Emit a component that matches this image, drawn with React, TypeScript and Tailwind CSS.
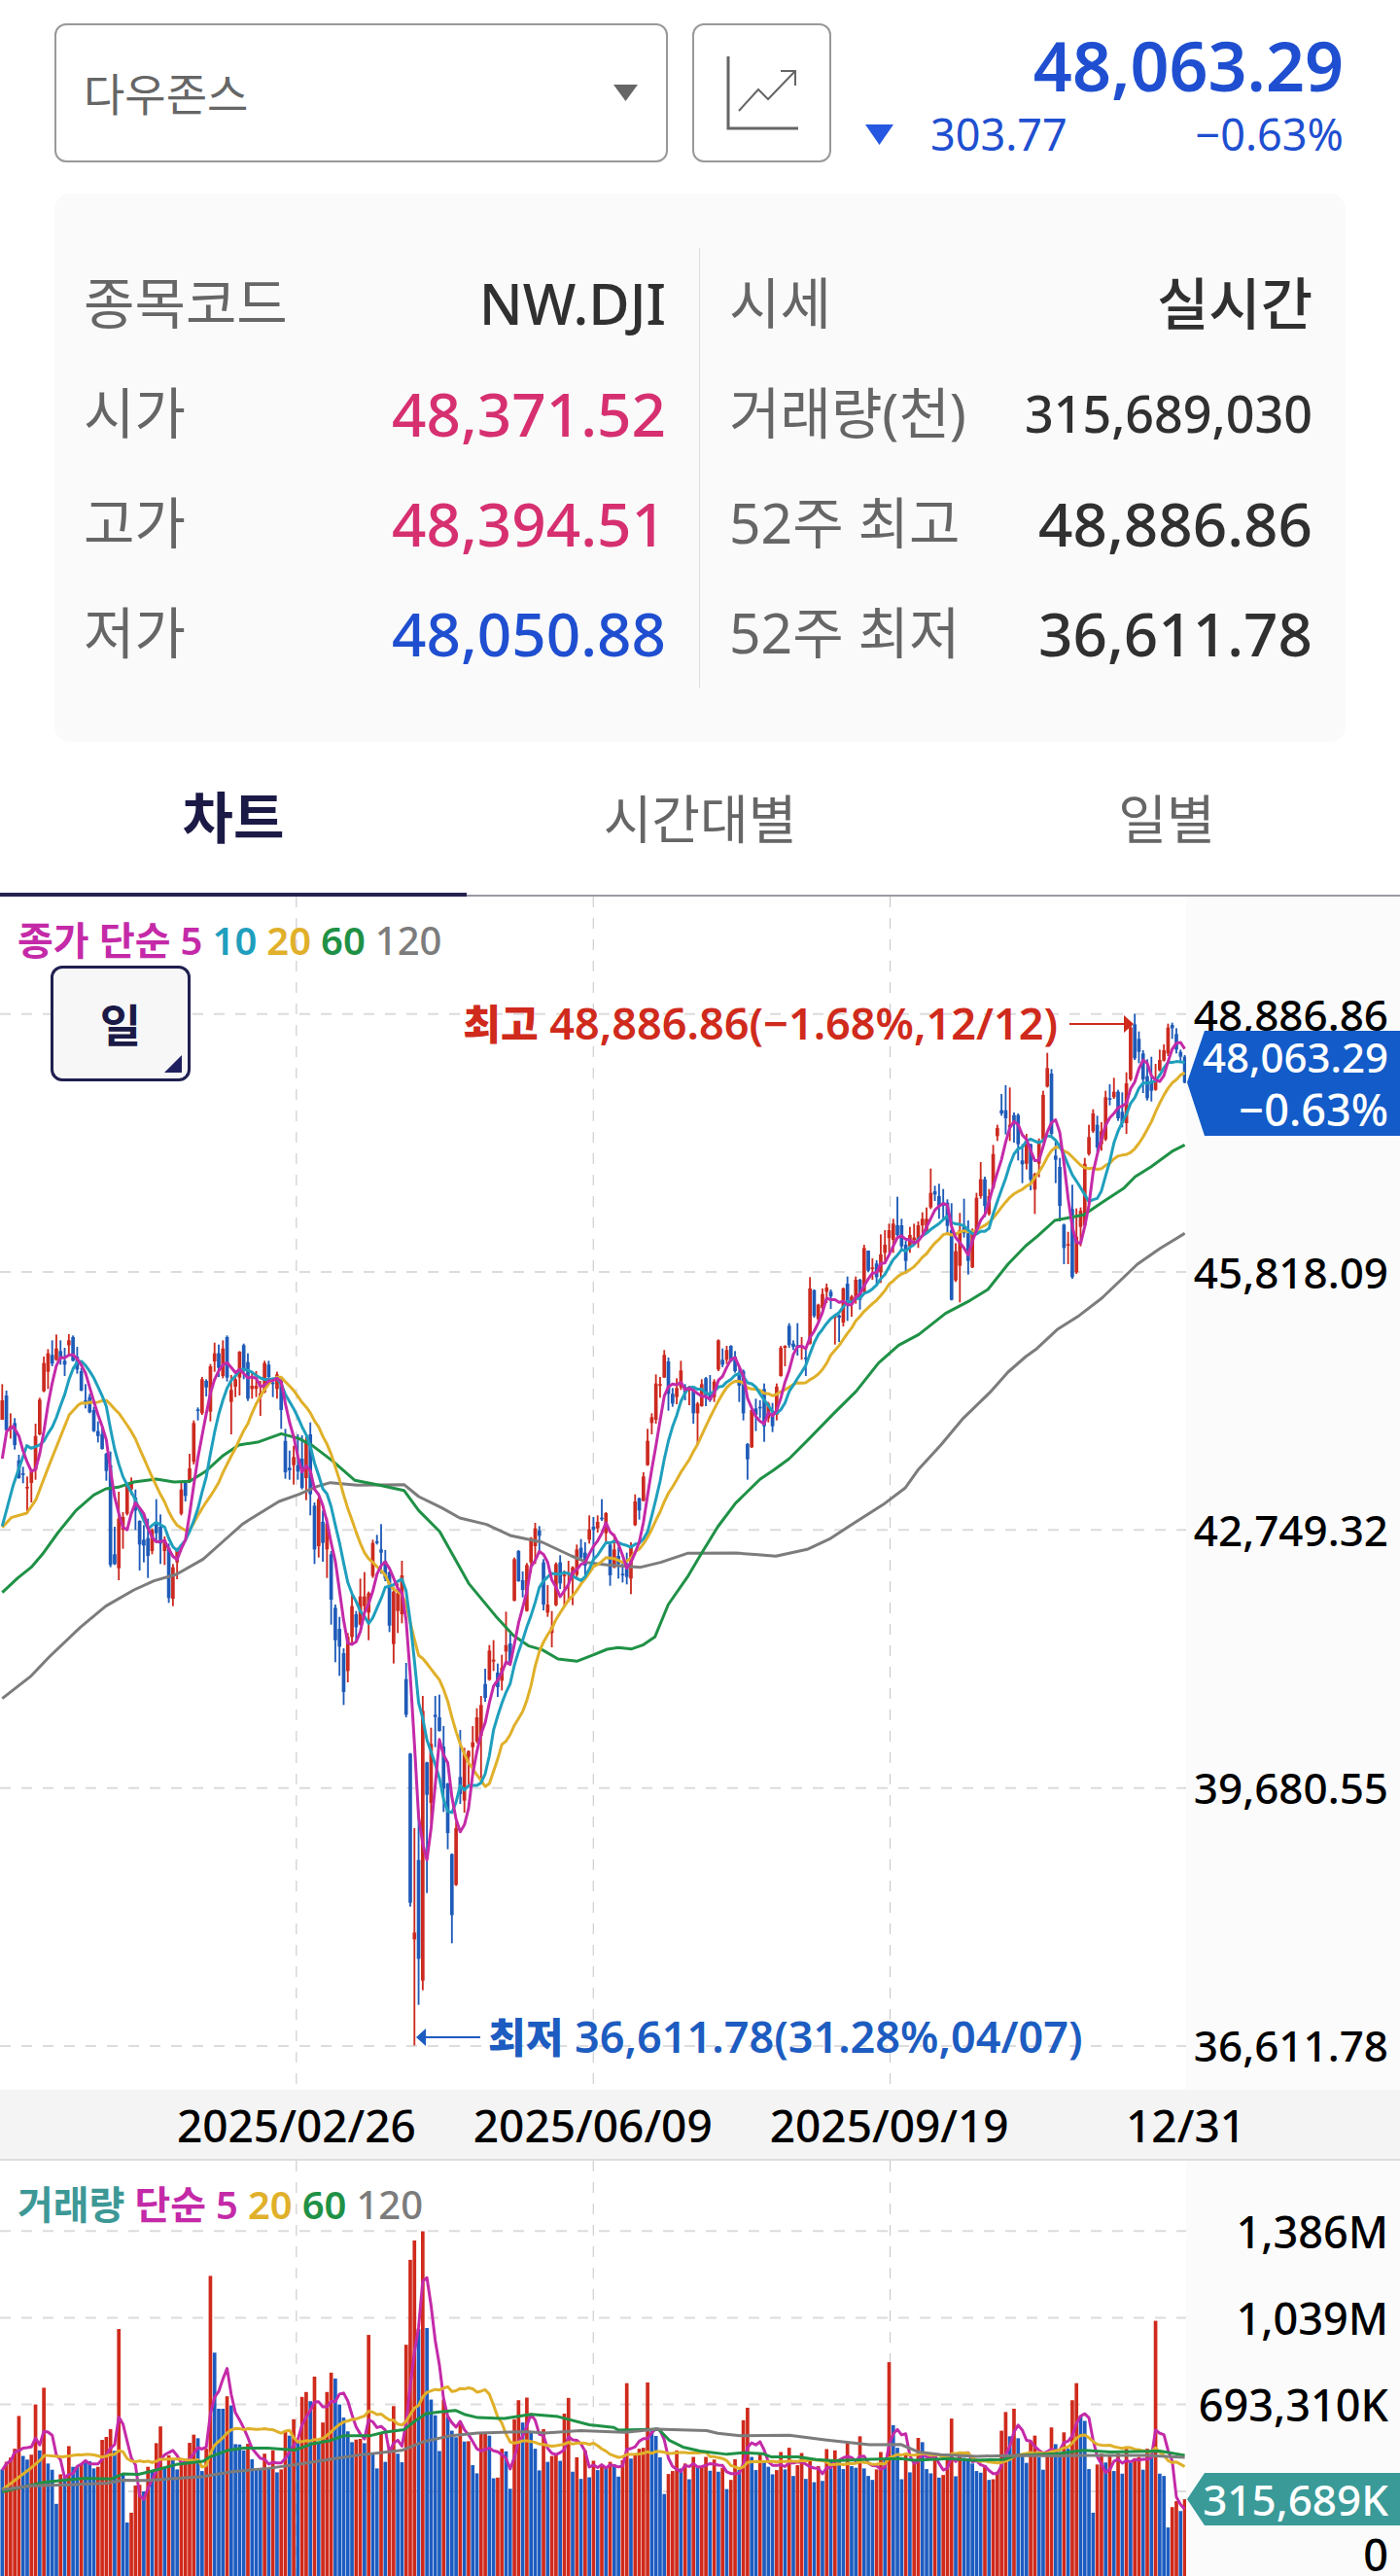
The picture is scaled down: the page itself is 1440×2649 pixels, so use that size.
/*
 * Index detail page: quote header, summary card, daily candle chart and volume chart
 */
import { useState } from "react";

type Point = [number, number];

// Chart space: one candle every STEP units, price pane is 3681 units high
const STEP = 9.327;
const FIRST_X = 5;
const PLOT_W = 2657;
const PRICE_H = 3681;
const VOLUME_TOP = 302;
const VOLUME_H = 1266;

const RED = "#cc2a20";
const BLUE = "#1f5bb8";

const MA_COLORS: Record<number, string> = {
  5: "#c42aa8",
  10: "#1f9fbd",
  20: "#e0b02a",
  60: "#1f9146",
  120: "#7c7c7c",
};

// direction, high, body top, body bottom, low (relative to the block's base)
const candleBlocks = [
  {
    base: 1254,
    rows: `r 250 300 360 360|b 270 285 392 392|r 340 380 390 418|b 355 370 438 452|b 468 485 540 542|b 505 525 530 556
r 535 567 571 650|r 512 520 555 615|r 372 410 515 545|r 292 298 405 408|r 165 185 272 275|r 142 155 212 265
b 115 160 187 195|r 97 140 175 178|b 115 148 172 190|b 138 178 190 225|r 96 115 130 165|b 100 105 178 180
b 135 165 205 218|b 200 210 270 272|b 250 300 310 325|b 280 290 337 340|b 320 330 395 398|b 365 395 410 430
b 385 405 450 452|b 462 465 518 548|b 458 500 808 815|b 690 775 805 808|r 582 665 818 855|r 645 660 700 758
r 555 560 650 655|r 538 555 575 592|b 575 600 640 700|b 670 672 745 825|b 685 730 748 800|b 665 725 780 848
r 695 700 765 775|b 605 680 710 740|b 652 690 742 805|r 720 730 765 808|b 742 755 910 925|r 805 815 912 935
r 755 760 800 852|r 555 575 650 655|b 550 555 595 612|r 465 510 552 555|r 362 370 490 498|b 322 328 333 362
r 228 235 340 345|b 235 240 260 288|r 188 195 335 365|r 122 155 180 212|b 128 155 200 228|r 115 140 225 232
b 100 105 230 242|r 222 268 305 405|r 222 235 258 290|r 148 150 230 285|b 125 130 205 235|b 155 182 295 302
r 215 255 265 295|r 210 255 265 290|r 240 278 290 348|r 178 185 275 278|b 178 190 228 245|b 230 245 250 290
r 212 220 265 295|b 232 240 330 388|b 388 425 522 542|b 455 508 516 545|r 440 475 500 560|b 405 500 520 545
b 408 480 570 575|r 410 430 540 608|b 368 405 590 655|b 615 625 760 805|r 598 605 750 785|b 640 675 740 798
r 662 680 760 848|b 765 775 915 992|b 930 940 1040 1108|b 968 1005 1060 1150|b 1065 1080 1200 1240|r 1018 1030 1135 1170
r 892 935 1030 1050|b 950 960 1000 1045|r 850 905 992 995|r 830 905 935 970|r 890 895 955 1040|r 730 740 842 848
b 715 735 738 745|b 682 760 770 835|b 762 795 850 858|b 828 830 995 1015|r 875 890 1052 1112|r 865 895 950 1018
r 795 840 960 988|b 1110 1160 1270 1278`,
  },
  {
    base: 2334,
    rows: `b 308 310 770 782|r 540 862 883 1210|b 485 638 943 1085|r 132 178 1010 1040|b 335 337 437 740|r 230 280 462 525
b 132 190 197 290|b 128 198 240 242|b 225 288 418 490|b 400 402 555 605|b 618 620 808 895|r 520 540 715 718
b 237 382 435 465|r 292 310 455 492|r 300 302 320 415|r 225 275 290 375|r 170 198 272 278|r 132 160 255 400
b 48 95 138 150`,
  },
  {
    base: 1254,
    rows: `r 1055 1072 1162 1165|r 1040 1100 1106 1135|b 1112 1140 1185 1215|r 1085 1125 1165 1195|r 952 1055 1075 1115|b 1020 1050 1110 1115
r 785 790 918 920|b 762 765 858 860|b 828 855 885 908|r 802 808 950 952|r 722 725 800 832|r 678 695 750 805
b 688 702 718 765|b 790 800 930 948|r 870 930 955 968|r 950 1000 1018 1062|r 800 805 932 935|b 778 800 865 882
r 825 838 842 938|r 795 832 838 922|r 812 815 845 932|r 745 760 838 845|b 728 755 785 792|b 738 770 810 848
r 655 698 730 742|b 660 690 700 800|r 655 675 695 708|b 605 662 667 672|r 645 648 710 742|b 738 745 840 872
r 712 760 815 818|b 752 780 805 850|b 800 835 840 862|b 770 805 845 868|r 738 750 850 898|r 590 612 685 688
b 600 602 640 668|r 522 535 610 612|r 388 425 500 502|r 340 352 370 405|r 220 248 360 372|r 228 250 255 292
r 145 160 230 230|b 168 180 280 332|b 262 280 310 320|r 232 262 290 312|r 178 208 260 268|b 250 258 278 300
r 255 258 270 315|b 255 265 340 372|r 305 310 340 438|r 235 250 318 320|b 228 232 285 318|b 222 280 300 305
r 235 242 290 305|r 112 115 205 210|b 140 175 190 198|r 132 145 175 188|b 130 132 180 182|b 148 165 210 215
b 198 215 255 305|b 205 210 340 362|b 432 435 482 545|r 328 330 445 447|b 295 325 345 395|b 300 320 325 355
b 248 265 380 428|r 305 310 355 368|b 308 345 380 398|r 248 258 345 362|r 132 138 225 227|r 130 132 138 195
b 62 70 130 138|b 115 125 135 145|b 62 130 138 162|r 105 130 138 175|b 140 168 172 225`,
  },
  {
    base: -6,
    rows: `r 1180 1215 1385 1388|b 1218 1220 1300 1305|r 1262 1265 1310 1318|r 1215 1232 1275 1280|r 1200 1212 1225 1260|b 1218 1225 1240 1278
r 1295 1300 1305 1388|b 1295 1298 1305 1380|r 1212 1215 1320 1332|b 1178 1200 1265 1315|r 1235 1240 1260 1302|r 1178 1188 1250 1262
b 1185 1188 1250 1280|r 1080 1090 1225 1228|b 1098 1098 1160 1165|r 1122 1150 1155 1188|b 1128 1138 1180 1200|r 1048 1110 1165 1198
r 1035 1080 1105 1140|r 1015 1035 1060 1105|r 1000 1015 1065 1105|b 932 1020 1050 1055|b 1000 1020 1085 1095|b 1068 1080 1130 1170
r 1025 1050 1085 1105|r 1015 1058 1065 1082|r 1008 1020 1065 1090|r 980 1000 1020 1045|r 965 1000 1040 1045|r 845 920 965 970
b 898 915 925 945|b 892 930 960 1000|b 908 950 960 1000|b 940 950 1022 1045|b 952 1035 1250 1252|r 1075 1100 1190 1195
r 982 1035 1145 1258|b 938 1025 1045 1058|b 1005 1045 1130 1172|r 1030 1035 1150 1152|r 920 935 1040 1048|r 825 878 930 938
b 870 878 960 995|r 908 930 985 990|r 772 800 905 908|r 710 720 745 760|b 615 665 675 682|b 588 665 690 740
r 595 710 718 760|b 672 680 705 765|b 675 680 770 820|b 770 820 832 890|r 738 760 830 848|b 768 770 880 912
r 858 862 910 985|r 752 765 830 872|r 605 618 755 762|r 488 535 592 595|b 538 552 738 748|b 760 805 818 890
b 812 840 960 1008|b 1015 1018 1090 1140|r 1040 1078 1082 1140|b 895 970 1180 1185|r 968 1055 1165 1170|r 965 975 1025 1085
r 812 830 1020 1022|r 710 748 800 805|r 662 675 730 735|b 682 710 780 795|r 702 730 770 790|r 605 625 755 760
b 585 628 633 650|r 565 608 625 630|b 602 608 690 698|b 610 670 705 718|r 548 582 705 738|r 395 410 570 575
b 368 400 505 510|b 422 445 485 520|b 480 490 570 612|b 508 560 628 635|b 500 575 605 638|r 522 570 602 605
r 478 510 542 545|r 462 480 512 515|r 398 410 490 498|b 395 402 412 445|b 412 430 478 490|b 478 485 500 515
b 495 500 580 582`,
  },
];

const candles = candleBlocks.flatMap(({ base, rows }) =>
  rows.split(/[|\n]/).map((row) => {
    const [dir, ...values] = row.trim().split(" ");
    const [high, top, bottom, low] = values.map((v) => Number(v) + base);
    return { up: dir === "r", high, top, bottom, low };
  })
);

const volumes = `b1243 r1220 r1207 r1180 r1080 b1202 b1213 r1198 r1045 b1185 r994 b1225 b1244 b1348 r1258 b1268 r1172 b1235 b1235 r1225
b1215 b1218 b1240 r1235 r1153 r1144 r1120 b1186 r815 b1258 b1405 r1375 r1292 r1290 b1310 r1235 b1248 r1163 r1112 b1235
r1200 b1215 b1243 r1225 r1210 r1162 r1137 b1148 b1248 r1180 r653 b887 b1058 b1058 r1020 b1048 b1166 b1167 b1185 r1165
b1212 b1242 b1242 r1195 b1242 r1185 b1252 r1243 r1125 b1140 r1090 b1162 r1022 r1007 b1035 r960 b1160 r1100 r1007 r948
b966 b1045 b1085 b1127 b1160 r1152 r1150 b1163 r833 b1192 b1240 r1130 b1220 r1175 r1050 b1195 b1221 r863 r604 r545
b815 r517 b812 b1030 b1078 b1187 r1030 b1083 b1125 b1145 r1100 b1158 r1157 b1230 b1255 r1135 r1132 b1140 b1270 r1268
r1180 b1188 b1302 r1090 r1032 b1100 r1024 b1130 b1180 b1246 r1120 b1220 r1202 r1200 b1217 r1073 r1025 b1250 r1206 b1272
r1185 b1267 r1217 b1245 r1230 b1235 r1220 b1228 b1265 r1215 r980 b1210 r1200 r1180 r1177 r978 b1120 b1141 b1206 b1318
r1257 r1248 r1185 b1240 r1225 b1273 r1205 b1235 r1235 r1205 b1247 r1213 b1250 r1238 b1303 r1275 r1212 b1245 r1093 r1055
b1205 b1245 r1195 b1220 b1235 b1258 r1245 r1190 b1243 r1177 b1263 r1230 r1193 b1272 r1218 b1282 r1233 b1278 r1181 b1215
r1185 b1215 b1242 r1160 b1233 b1238 r1142 b1240 b1263 b1275 r1243 r1190 b1215 r916 b1108 b1177 b1273 r1197 b1252 r1225
r1147 b1160 b1242 b1255 r1200 b1268 r1260 r1215 r1088 b1264 r1190 b1208 b1210 b1225 b1248 b1253 r1230 b1275 r1273 r1250
r1125 r1068 b1142 r1058 b1148 b1200 b1223 r1155 r1140 b1205 b1244 r1200 r1115 b1166 b1195 r1130 b1180 r1032 r980 b1080
b1095 b1242 b1375 r1228 r1195 b1222 r1200 b1248 r1195 b1256 r1180 b1222 r1210 r1205 b1244 r1180 b1195 r790 b1256 b1263
b1420 r1358 r1340 b1370 r1334`
  .split(/\s+/)
  .map((v) => ({ up: v[0] === "r", top: Number(v.slice(1)) }));

const xAt = (i: number) => FIRST_X + i * STEP;

function movingAverage(values: number[], period: number, lead: Point[]): Point[] {
  const points = [...lead];
  for (let i = period - 1; i < values.length; i++) {
    const sum = values.slice(i - period + 1, i + 1).reduce((a, b) => a + b, 0);
    points.push([xAt(i), sum / period]);
  }
  return points;
}

const closes = candles.map((c) => (c.up ? c.top : c.bottom));
const volumeTops = volumes.map((v) => v.top);

const priceLines: { period: number; points: Point[] }[] = [
  {
    period: 120,
    points: [
      [5, 2474], [70, 2404], [110, 2346], [180, 2254], [237, 2189], [300, 2139], [345, 2111], [395, 2091], [455, 2044],
      [500, 1989], [545, 1934], [625, 1866], [670, 1844], [710, 1820], [740, 1808], [800, 1816], [905, 1814], [938, 1851],
      [990, 1886], [1030, 1917], [1090, 1937], [1145, 1972], [1215, 1992], [1280, 2034], [1315, 2054], [1360, 2062],
      [1435, 2069], [1480, 2054], [1540, 2026], [1648, 2025], [1698, 2030], [1738, 2035], [1808, 2014], [1858, 1982],
      [1908, 1937], [1978, 1876], [2028, 1824], [2058, 1766], [2108, 1691], [2158, 1609], [2218, 1529], [2258, 1467],
      [2298, 1419], [2323, 1394], [2368, 1336], [2418, 1292], [2468, 1239], [2548, 1134], [2598, 1086], [2654, 1039],
    ],
  },
  {
    period: 60,
    points: [
      [5, 2147], [40, 2102], [70, 2069], [95, 2029], [130, 1962], [170, 1894], [210, 1846], [237, 1827], [265, 1822],
      [300, 1806], [350, 1797], [390, 1806], [425, 1804], [460, 1774], [500, 1724], [535, 1692], [580, 1682], [630, 1657],
      [670, 1672], [700, 1694], [745, 1741], [795, 1801], [850, 1816], [905, 1832], [938, 1894], [985, 1959],
      [1050, 2119], [1110, 2219], [1150, 2279], [1185, 2312], [1215, 2324], [1250, 2352], [1292, 2359], [1330, 2339],
      [1360, 2322], [1385, 2317], [1415, 2321], [1440, 2309], [1467, 2284], [1497, 2184], [1540, 2099], [1568, 2034],
      [1608, 1944], [1648, 1871], [1703, 1797], [1733, 1769], [1768, 1734], [1808, 1679], [1868, 1594], [1918, 1526],
      [1968, 1439], [2013, 1384], [2058, 1351], [2118, 1286], [2173, 1246], [2213, 1212], [2258, 1134], [2298, 1077],
      [2323, 1049], [2363, 999], [2428, 982], [2468, 944], [2518, 899], [2543, 864], [2578, 834], [2628, 784], [2654, 766],
    ],
  },
  {
    period: 20,
    points: movingAverage(closes, 20, [
      [5, 1946], [25, 1916], [60, 1902], [80, 1862], [110, 1754], [155, 1599], [175, 1569],
    ]),
  },
  { period: 10, points: movingAverage(closes, 10, [[5, 1942], [30, 1814], [60, 1694], [70, 1702]]) },
  { period: 5, points: movingAverage(closes, 5, [[5, 1734], [15, 1649], [30, 1634]]) },
];

const volumeLines: { period: number; points: Point[] }[] = [
  { period: 5, points: movingAverage(volumeTops, 5, [[5, 1245], [15, 1225], [25, 1215], [33, 1190]]) },
  {
    period: 20,
    points: movingAverage(volumeTops, 20, [
      [5, 1305], [25, 1285], [70, 1238], [90, 1215], [100, 1200], [140, 1205], [175, 1198],
    ]),
  },
  {
    period: 60,
    points: [
      [5, 1312], [40, 1300], [100, 1282], [190, 1270], [250, 1272], [275, 1257], [310, 1258], [350, 1245], [395, 1228],
      [455, 1218], [470, 1205], [510, 1185], [545, 1178], [600, 1178], [660, 1184], [700, 1165], [740, 1155], [770, 1140],
      [830, 1140], [860, 1130], [905, 1122], [930, 1095], [955, 1073], [985, 1068], [1020, 1063], [1040, 1075],
      [1070, 1085], [1130, 1088], [1190, 1075], [1250, 1082], [1320, 1107], [1375, 1115], [1385, 1123], [1475, 1120],
      [1500, 1155], [1530, 1175], [1568, 1187], [1628, 1197], [1668, 1192], [1708, 1195], [1728, 1205], [1788, 1205],
      [1828, 1213], [1868, 1217], [1948, 1212], [2018, 1210], [2048, 1215], [2128, 1210], [2178, 1215], [2248, 1213],
      [2278, 1200], [2368, 1195], [2428, 1185], [2488, 1190], [2598, 1187], [2654, 1200],
    ],
  },
  {
    period: 120,
    points: [
      [5, 1305], [70, 1293], [150, 1290], [240, 1285], [275, 1276], [330, 1277], [400, 1270], [455, 1265], [520, 1250],
      [600, 1240], [680, 1225], [750, 1210], [800, 1200], [900, 1185], [950, 1158], [1010, 1140], [1070, 1132],
      [1180, 1128], [1220, 1132], [1300, 1125], [1400, 1130], [1470, 1120], [1583, 1125], [1608, 1133], [1658, 1140],
      [1768, 1139], [1848, 1153], [1948, 1168], [2018, 1167], [2058, 1190], [2108, 1198], [2188, 1203], [2288, 1200],
      [2368, 1202], [2428, 1200], [2568, 1200], [2654, 1206],
    ],
  },
];

const gridX = [664, 1329, 1994];

function Grid({ rows, top, height }: { rows: number[]; top: number; height: number }) {
  return (
    <g fill="none" strokeDasharray="11 11">
      {gridX.map((x) => (
        <line key={x} x1={x} x2={x} y1={top} y2={top + height} stroke="#c4c4c4" vectorEffect="non-scaling-stroke" />
      ))}
      {rows.map((y) => (
        <line key={y} x1={0} x2={PLOT_W} y1={y} y2={y} stroke="#dcdcdc" strokeWidth={2} vectorEffect="non-scaling-stroke" />
      ))}
    </g>
  );
}

function AverageLines({ lines }: { lines: { period: number; points: Point[] }[] }) {
  return (
    <g fill="none" strokeWidth={3} strokeLinejoin="round">
      {lines.map(({ period, points }) => (
        <polyline
          key={period}
          points={points.map((p) => p.join(",")).join(" ")}
          stroke={MA_COLORS[period]}
          vectorEffect="non-scaling-stroke"
        />
      ))}
    </g>
  );
}

function PricePlot() {
  return (
    <svg
      className="block h-full w-full"
      viewBox={`0 0 ${PLOT_W} ${PRICE_H}`}
      preserveAspectRatio="none"
      role="img"
      aria-label="다우존스 일봉 차트"
    >
      <Grid rows={[362, 1158, 1954, 2750, 3546]} top={0} height={PRICE_H} />
      {candles.map((c, i) => (
        <g key={i} fill={c.up ? RED : BLUE}>
          <rect x={xAt(i) - 2} y={c.high} width={4} height={c.low - c.high} />
          <rect x={xAt(i) - 4} y={c.top} width={8} height={Math.max(c.bottom - c.top, 5)} />
        </g>
      ))}
      <AverageLines lines={priceLines} />
    </svg>
  );
}

function VolumePlot() {
  return (
    <svg
      className="block h-full w-full"
      viewBox={`0 ${VOLUME_TOP} ${PLOT_W} ${VOLUME_H}`}
      preserveAspectRatio="none"
      role="img"
      aria-label="거래량 차트"
    >
      <Grid rows={[516, 781, 1045, 1310]} top={VOLUME_TOP} height={VOLUME_H} />
      {volumes.map((v, i) => (
        <rect
          key={i}
          x={xAt(i) - 4}
          y={v.top}
          width={8}
          height={VOLUME_TOP + VOLUME_H - v.top}
          fill={v.up ? "#cf2a1c" : "#1d5cc0"}
        />
      ))}
      <AverageLines lines={volumeLines} />
    </svg>
  );
}

const leftStats = [
  { label: "종목코드", value: "NW.DJI", className: "text-[58px] text-[#303030]" },
  { label: "시가", value: "48,371.52", className: "text-[62px] text-[#d63070]" },
  { label: "고가", value: "48,394.51", className: "text-[62px] text-[#d63070]" },
  { label: "저가", value: "48,050.88", className: "text-[62px] text-[#1f4fd0]" },
];

const rightStats = [
  { label: "시세", value: "실시간", className: "text-[58px] text-[#303030]" },
  { label: "거래량(천)", value: "315,689,030", className: "text-[52px] text-[#303030]" },
  { label: "52주 최고", value: "48,886.86", className: "text-[62px] text-[#303030]" },
  { label: "52주 최저", value: "36,611.78", className: "text-[62px] text-[#303030]" },
];

function StatList({ items }: { items: typeof leftStats }) {
  return (
    <dl>
      {items.map((item) => (
        <div key={item.label} className="flex h-[113px] items-center justify-between whitespace-nowrap">
          <dt className="text-[57px] text-[#666]">{item.label}</dt>
          <dd className={`font-medium ${item.className}`}>{item.value}</dd>
        </div>
      ))}
    </dl>
  );
}

const tabs = ["차트", "시간대별", "일별"];

export default function App() {
  const [tab, setTab] = useState("차트");

  return (
    <main className="bg-white pt-6 leading-none font-['Noto_Sans','Noto_Sans_CJK_KR',sans-serif]">
      {/* Quote header */}
      <header className="flex h-[143px] gap-[25px] px-14">
        <div className="relative min-w-0 flex-1">
          <select
            aria-label="지수 선택"
            className="h-full w-full appearance-none rounded-xl border-2 border-[#999] bg-white px-[28px] text-[46px] text-[#666]"
          >
            <option>다우존스</option>
          </select>
          <svg className="pointer-events-none absolute top-[63px] right-[31px] h-[17px] w-[25px]" viewBox="0 0 25 17">
            <path d="M0 0H25L12.5 17Z" fill="#666" />
          </svg>
        </div>
        <button
          type="button"
          aria-label="차트 보기"
          className="flex w-[143px] items-center justify-center rounded-xl border-2 border-[#999]"
        >
          <svg width="74" height="76" viewBox="0 0 74 76" fill="none" stroke="#666" strokeWidth="3">
            <path d="M2 0V74H74" />
            <path d="M13 56L33 34L43 44L71 15M56 15H71V30" strokeWidth="2" />
          </svg>
        </button>
        <div className="flex w-[504px] flex-col pr-[2px] text-[#1f4fd0]">
          <strong className="text-right text-[70px] leading-[86px] font-semibold">48,063.29</strong>
          <div className="flex items-center pl-[10px] text-[45px] leading-[56px]">
            <svg className="h-[21px] w-[29px]" viewBox="0 0 29 21">
              <path d="M0 0H29L14.5 21Z" fill="#2557e0" />
            </svg>
            <span className="ml-[38px]">303.77</span>
            <span className="ml-auto">−0.63%</span>
          </div>
        </div>
      </header>

      {/* Summary */}
      <section className="mx-14 mt-8 grid grid-cols-2 rounded-2xl bg-[#fafafa] py-14">
        <div className="border-r border-[#ddd] pr-[34px] pl-[30px]">
          <StatList items={leftStats} />
        </div>
        <div className="pr-[34px] pl-[30px]">
          <StatList items={rightStats} />
        </div>
      </section>

      <nav className="flex h-[159px] border-b-2 border-[#999aa2]">
        {tabs.map((name) => (
          <button
            key={name}
            type="button"
            onClick={() => setTab(name)}
            className={
              name === tab
                ? "-mb-[2px] flex-1 border-b-4 border-[#25244f] text-[57px] font-bold text-[#1b1a46]"
                : "flex-1 text-[54px] text-[#666]"
            }
          >
            {name}
          </button>
        ))}
      </nav>

      {/* Price chart */}
      <section className="flex h-[1227px]">
        <div className="relative min-w-0 flex-1">
          <PricePlot />
          <p className="absolute top-5 left-[18px] flex gap-[10px] text-[40px] leading-[50px] font-semibold">
            <span className="font-bold text-[#c42aa8]">종가 단순</span>
            <span className="text-[#c42aa8]">5</span>
            <span className="text-[#1f9fbd]">10</span>
            <span className="text-[#e0b02a]">20</span>
            <span className="text-[#1f9146]">60</span>
            <span className="font-medium text-[#7c7c7c]">120</span>
          </p>
          <button
            type="button"
            className="absolute top-[71px] left-[52px] h-[119px] w-[144px] rounded-xl border-3 border-[#1f1f50] bg-[#f7f7f8] text-[46px] font-bold text-[#1b1a46]"
          >
            일
            <svg className="absolute right-[6px] bottom-[6px] h-[18px] w-[18px]" viewBox="0 0 18 18">
              <path d="M18 0V18H0Z" fill="#1f1f60" />
            </svg>
          </button>
          <p className="absolute top-[102px] right-[54px] flex items-center whitespace-nowrap text-[45px] leading-[56px] font-semibold text-[#cf2a1c]">
            <span>
              <b className="text-[42px]">최고</b> 48,886.86(−1.68%,12/12)
            </span>
            <svg className="ml-3 h-6 w-[66px]" viewBox="0 0 66 24">
              <path d="M0 12H56" stroke="#cf2a1c" strokeWidth="2" />
              <path d="M56 3L66 12L56 21Z" fill="#cf2a1c" />
            </svg>
          </p>
          <p className="absolute bottom-[26px] left-[428px] flex items-center whitespace-nowrap text-[45px] leading-[56px] font-semibold text-[#1d5cc0]">
            <svg className="mr-2 h-6 w-[66px]" viewBox="0 0 66 24">
              <path d="M10 12H66" stroke="#1d5cc0" strokeWidth="2" />
              <path d="M10 3L0 12L10 21Z" fill="#1d5cc0" />
            </svg>
            <span>
              <b className="text-[42px]">최저</b> 36,611.78(31.28%,04/07)
            </span>
          </p>
        </div>
        <div className="relative w-[220px] bg-[#fbfbfc] pr-3">
          <ul className="flex flex-col gap-[221px] pt-[99px] text-right text-[44px] leading-[44px] font-medium text-black">
            <li>48,886.86</li>
            <li>45,818.09</li>
            <li>42,749.32</li>
            <li>39,680.55</li>
            <li>36,611.78</li>
          </ul>
          <p className="absolute top-[138px] right-0 flex h-[108px] w-[219px] flex-col bg-[#125bc8] pr-3 text-right text-[42px] leading-[54px] font-medium text-white [clip-path:polygon(18px_0,100%_0,100%_100%,18px_100%,0_53px)]">
            <span>48,063.29</span>
            <span className="text-[45px]">−0.63%</span>
          </p>
        </div>
      </section>

      {/* Dates sit centred under the vertical grid lines */}
      <div className="h-[73px] border-b-2 border-[#dedede] bg-[#f4f4f4]">
        <div className="mr-[68px] grid h-full grid-cols-9 items-center text-center text-[46px] font-medium text-black">
          <span className="col-span-2 col-start-2">2025/02/26</span>
          <span className="col-span-2">2025/06/09</span>
          <span className="col-span-2">2025/09/19</span>
          <span className="col-span-2">12/31</span>
        </div>
      </div>

      {/* Volume chart */}
      <section className="flex h-[427px]">
        <div className="relative min-w-0 flex-1">
          <VolumePlot />
          <p className="absolute top-5 left-[18px] flex gap-[10px] text-[40px] leading-[50px] font-semibold">
            <span className="font-bold text-[#3d9896]">거래량</span>
            <span className="font-bold text-[#c42aa8]">단순</span>
            <span className="text-[#c42aa8]">5</span>
            <span className="text-[#e0b02a]">20</span>
            <span className="text-[#1f9146]">60</span>
            <span className="font-medium text-[#7c7c7c]">120</span>
          </p>
        </div>
        <div className="relative flex w-[220px] flex-col justify-between bg-[#fbfbfc] pr-3 text-right text-[45px] leading-[44px] font-medium text-black">
          <ul className="flex flex-col gap-[45px] pt-[51px]">
            <li>1,386M</li>
            <li>1,039M</li>
            <li>693,310K</li>
          </ul>
          <span>0</span>
          <p className="absolute top-[321px] right-0 h-[54px] w-[219px] bg-[#3a9a98] pr-3 text-[44px] leading-[54px] text-white [clip-path:polygon(18px_0,100%_0,100%_100%,18px_100%,0_50%)]">
            315,689K
          </p>
        </div>
      </section>
    </main>
  );
}
